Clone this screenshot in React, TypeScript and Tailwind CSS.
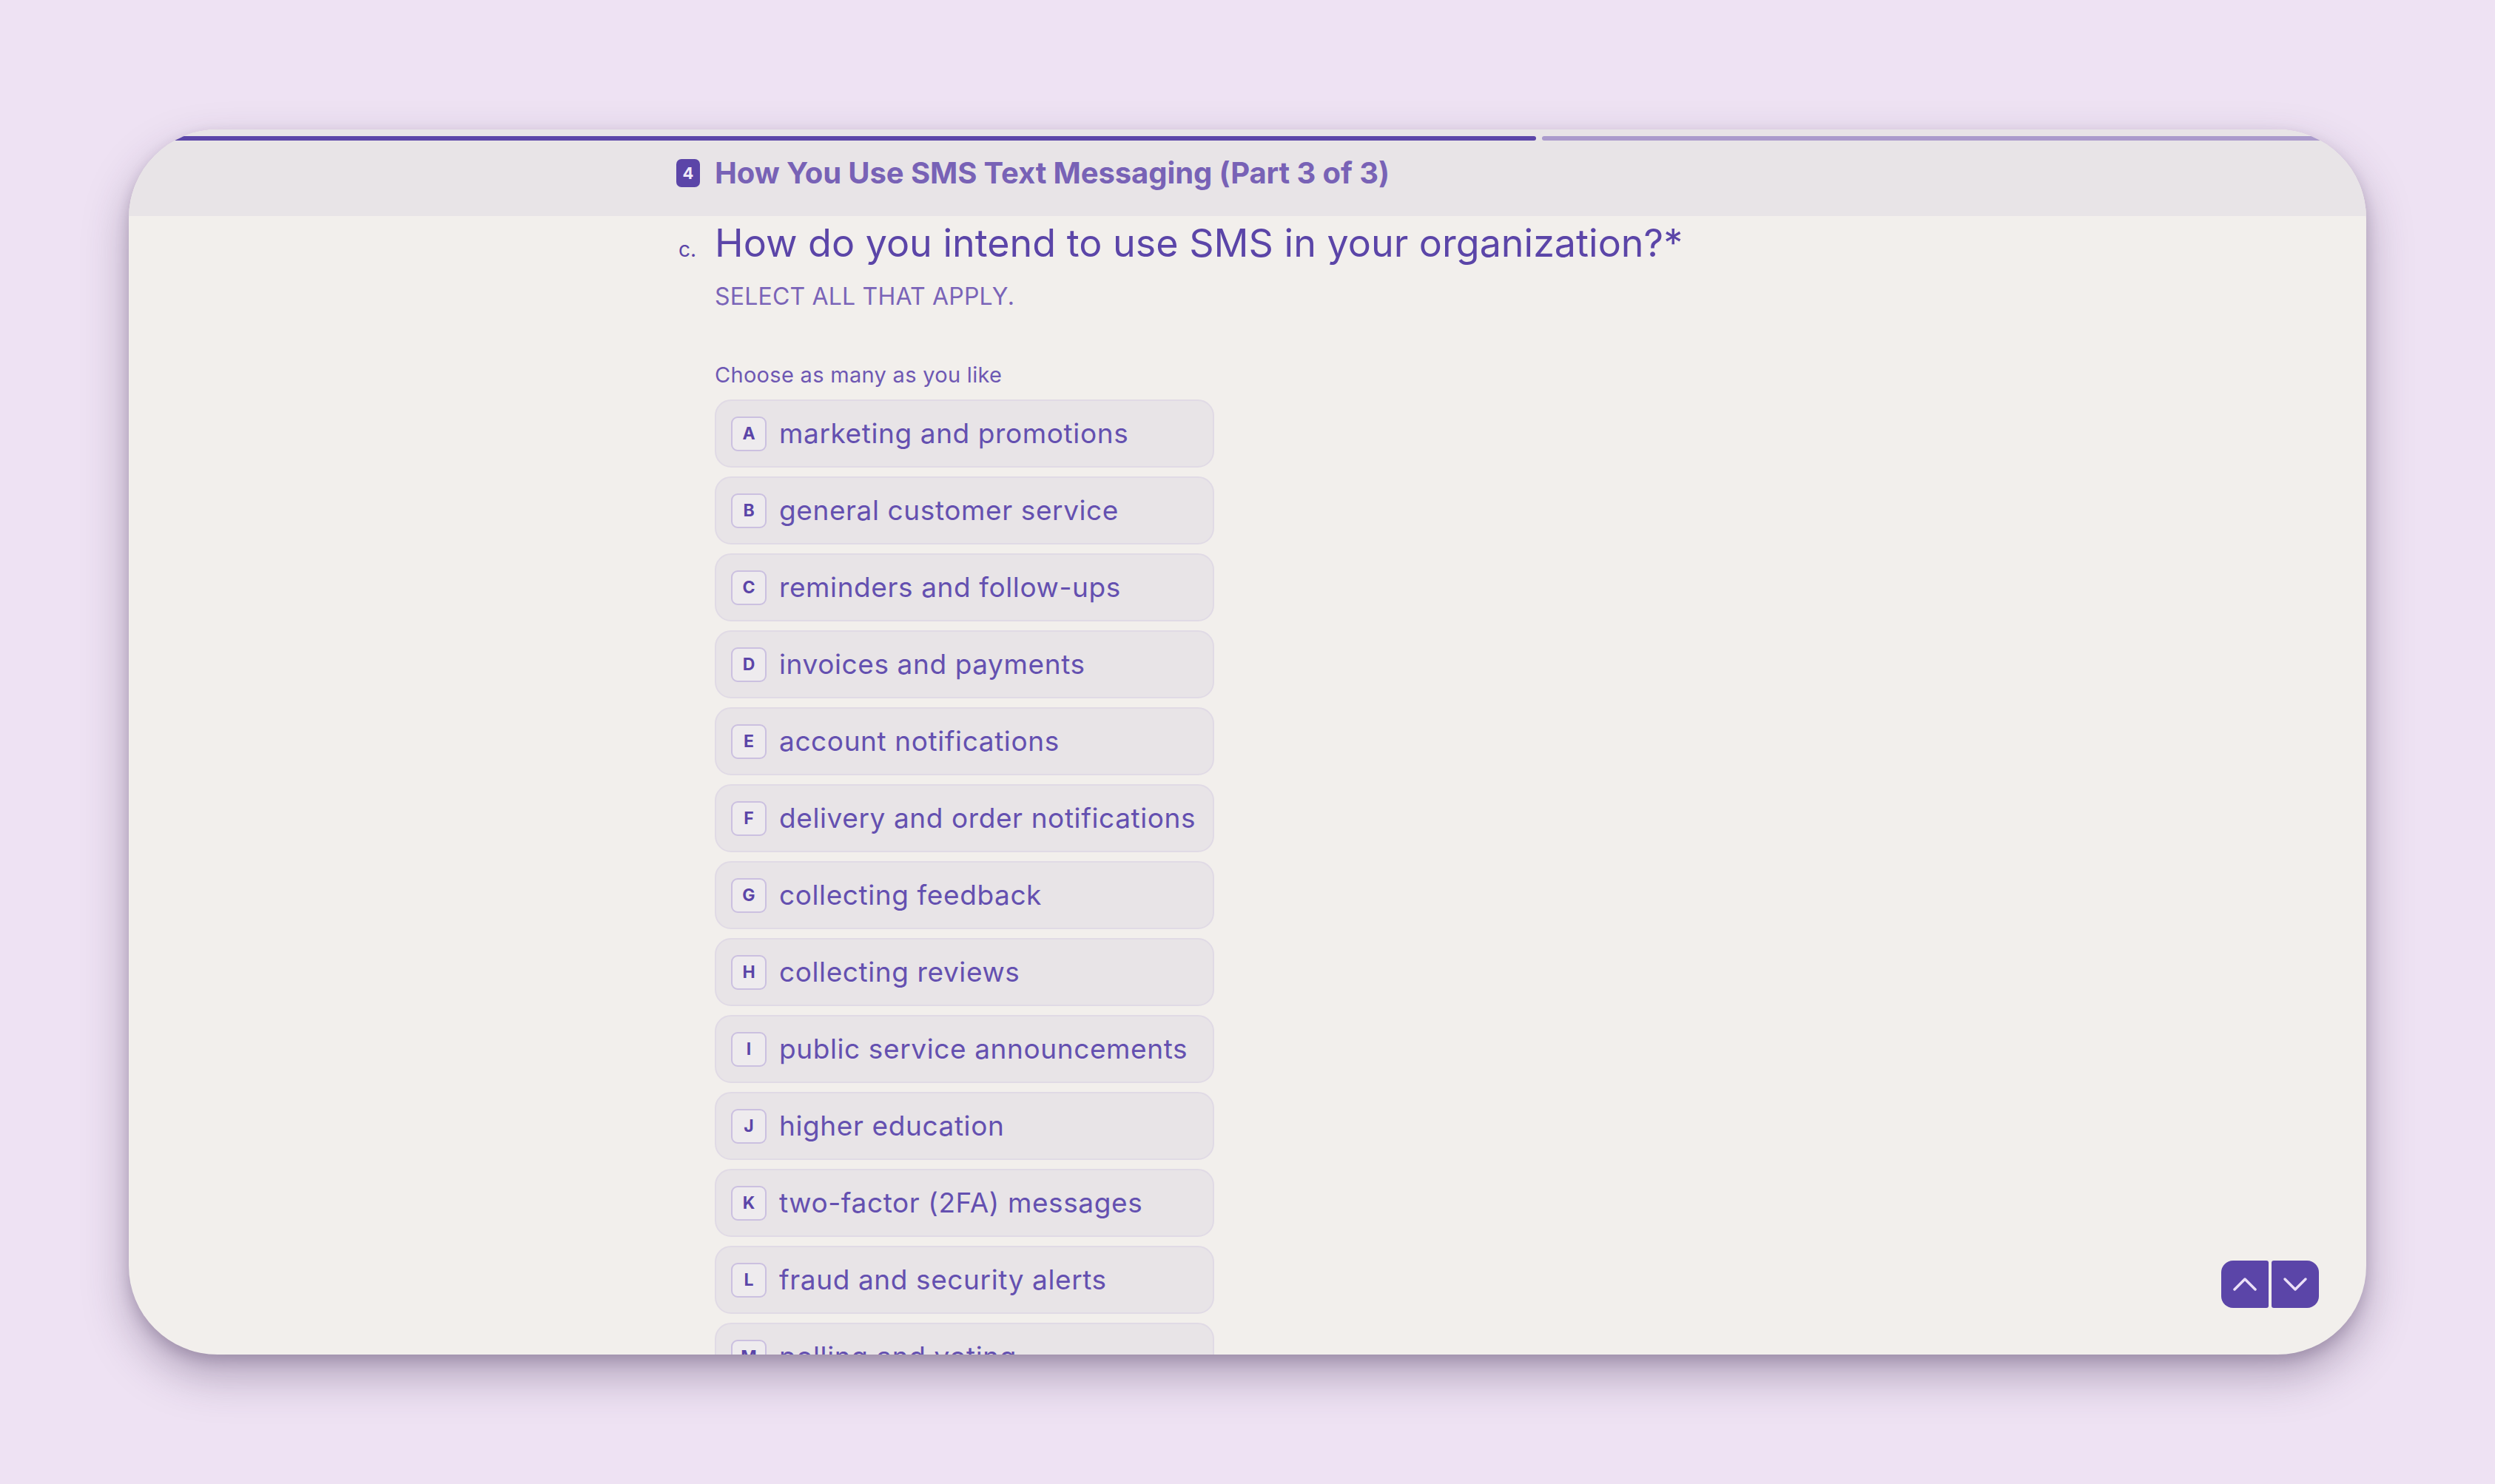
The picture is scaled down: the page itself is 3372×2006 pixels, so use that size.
const choices = [
  { key: "A", label: "marketing and promotions" },
  { key: "B", label: "general customer service" },
  { key: "C", label: "reminders and follow-ups" },
  { key: "D", label: "invoices and payments" },
  { key: "E", label: "account notifications" },
  { key: "F", label: "delivery and order notifications" },
  { key: "G", label: "collecting feedback" },
  { key: "H", label: "collecting reviews" },
  { key: "I", label: "public service announcements" },
  { key: "J", label: "higher education" },
  { key: "K", label: "two-factor (2FA) messages" },
  { key: "L", label: "fraud and security alerts" },
  { key: "M", label: "polling and voting" },
];

const Chevron = ({ up }: { up?: boolean }) => (
  <svg width="64" height="64" viewBox="0 0 64 64" fill="none">
    <polyline
      points={up ? "18,39 32,25 46,39" : "18,25 32,39 46,25"}
      stroke="#ebe0f7"
      strokeWidth="3.5"
      strokeLinecap="round"
      strokeLinejoin="round"
    />
  </svg>
);

const App = () => {
  return (
    <div className="min-h-screen bg-[#eee2f3] px-[174px] py-[175px] font-['Inter',sans-serif]">
      <div className="relative h-[1656px] rounded-[120px] overflow-hidden bg-[#f2efec] shadow-[0_28px_60px_rgba(60,40,80,0.35),0_8px_18px_rgba(60,40,80,0.2)] flex flex-col">
        {/* header */}
        <div className="h-[117px] shrink-0 bg-[#e8e4e7] flex flex-col">
          <div className="flex gap-[8px] h-[6px] mt-[9px]">
            <div className="w-[1902px] rounded-full bg-[#5b45a8]" />
            <div className="flex-1 rounded-full bg-[#ab9bcc]" />
          </div>
          <div className="w-[1440px] mx-auto flex items-center mt-[14px]">
            <div className="-ml-[52px] w-[52px] shrink-0">
              <span className="flex w-[32px] h-[38px] items-center justify-center rounded-[7px] bg-[#5b45a8] text-[#f0eaf8] text-[22px] font-bold">
                4
              </span>
            </div>
            <h1 className="text-[40px] font-bold text-[#7862b6] tracking-[-0.1px]">
              How You Use SMS Text Messaging (Part 3 of 3)
            </h1>
          </div>
        </div>

        {/* body */}
        <div className="w-[1440px] mx-auto pt-[3px]">
          <div className="flex items-baseline">
            <div className="-ml-[49px] w-[49px] shrink-0 text-[28px] text-[#5b45a8]">c.</div>
            <h2 className="text-[52px] leading-[1.3] text-[#5b45a8]">
              How do you intend to use SMS in your organization?*
            </h2>
          </div>
          <p className="mt-[14px] text-[32px] text-[#7a64b8] tracking-[0.2px]">SELECT ALL THAT APPLY.</p>
          <p className="mt-[60px] text-[29px] text-[#6e58b3] tracking-[0.3px]">Choose as many as you like</p>
          <div className="mt-[12px] flex flex-col gap-[12px]">
            {choices.map((c) => (
              <div
                key={c.key}
                className="w-[675px] h-[92px] shrink-0 flex items-center rounded-[22px] border-2 border-[#e0dae5] bg-[#e8e4e7] pl-[20px]"
              >
                <span className="flex w-[48px] h-[47px] shrink-0 items-center justify-center rounded-[9px] border-2 border-[#cbc0e0] bg-[#eeebee] text-[23px] font-bold text-[#5b45a8]">
                  {c.key}
                </span>
                <span className="ml-[17px] text-[37px] tracking-[0.6px] text-[#6450b0] whitespace-nowrap">{c.label}</span>
              </div>
            ))}
          </div>
        </div>

        {/* nav buttons */}
        <div className="absolute right-[64px] bottom-[63px] flex gap-[4px]">
          <button className="w-[64px] h-[64px] bg-[#5b45a8] rounded-l-[16px] rounded-r-[3px]">
            <Chevron up />
          </button>
          <button className="w-[64px] h-[64px] bg-[#5b45a8] rounded-r-[16px] rounded-l-[3px]">
            <Chevron />
          </button>
        </div>
      </div>
    </div>
  );
};

export default App;
